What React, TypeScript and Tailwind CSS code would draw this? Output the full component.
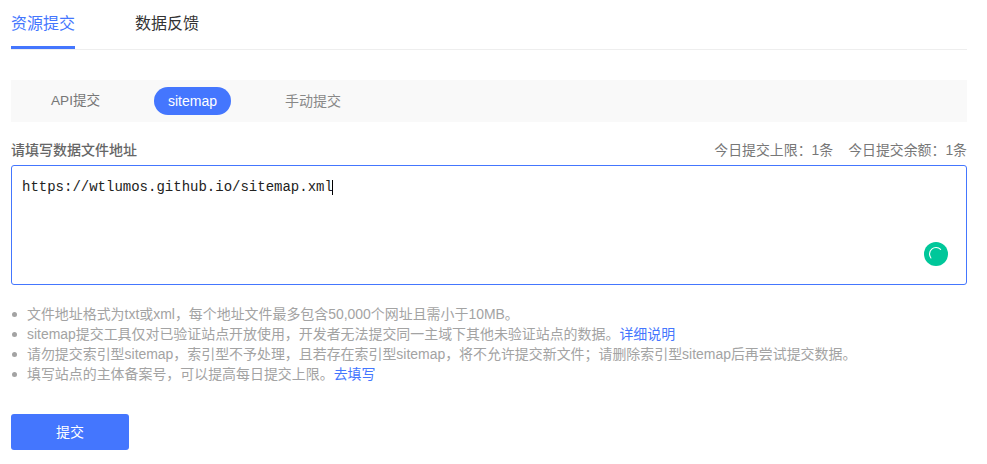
import React from 'react';

const notes: { text: string; link?: string }[] = [
  { text: '文件地址格式为txt或xml，每个地址文件最多包含50,000个网址且需小于10MB。' },
  { text: 'sitemap提交工具仅对已验证站点开放使用，开发者无法提交同一主域下其他未验证站点的数据。', link: '详细说明' },
  { text: '请勿提交索引型sitemap，索引型不予处理，且若存在索引型sitemap，将不允许提交新文件；请删除索引型sitemap后再尝试提交数据。' },
  { text: '填写站点的主体备案号，可以提高每日提交上限。', link: '去填写' },
];

export default function App() {
  return (
    <div className="w-[987px] h-[464px] overflow-hidden bg-white pl-[11px] pr-[20px] font-['Liberation_Sans','Noto_Sans_CJK_SC',sans-serif]">
      {/* Top tabs */}
      <div className="flex h-[50px] items-start border-b border-[#eeeeee]">
        <div className="h-[49px] w-[64px] border-b-[3px] border-[#4476fe] pt-[13px] text-center text-[16px] leading-[22px] text-[#4476fe]">资源提交</div>
        <div className="ml-[60px] pt-[13px] text-[16px] leading-[22px] text-[#333333]">数据反馈</div>
      </div>

      {/* Sub tabs */}
      <div className="mt-[30px] flex h-[42px] items-center bg-[#f9f9f9] pb-[1px] text-[14px]">
        <span className="ml-[40px] w-[49px] whitespace-nowrap text-[13.6px] leading-[28px] text-[#777777]">API提交</span>
        <span className="ml-[54px] h-[28px] w-[77px] rounded-full bg-[#4476fe] text-center leading-[28px] text-white">sitemap</span>
        <span className="ml-[54px] leading-[28px] text-[#888888]">手动提交</span>
      </div>

      {/* Label row */}
      <div className="mt-[18px] flex h-[21px] items-center justify-between">
        <span className="text-[14px] font-medium leading-[21px] text-[#666666]">请填写数据文件地址</span>
        <span className="flex gap-[15px] text-[13.9px] leading-[21px] text-[#777777]">
          <span>今日提交上限：1条</span>
          <span>今日提交余额：1条</span>
        </span>
      </div>

      {/* Input box */}
      <div className="relative mt-[4px] h-[120px] rounded-[3px] border border-[#4476fe] pl-[10px] pt-[11px]">
        <div className="flex items-center font-['Liberation_Mono',monospace] text-[14px] leading-[20px] text-[#222222]">
          https://wtlumos.github.io/sitemap.xml
          <span className="ml-[-1px] inline-block h-[15px] w-px bg-black" />
        </div>
        <div className="absolute bottom-[18px] right-[18px] flex h-[24px] w-[24px] items-center justify-center rounded-full bg-[#00c79a]">
          <svg width="16" height="16" viewBox="0 0 16 16" fill="none">
            <path d="M2.9 12A6.5 6.5 0 0 1 12.6 3.4" stroke="white" strokeWidth="1.1" strokeLinecap="round" />
          </svg>
        </div>
      </div>

      {/* Notes */}
      <ul className="mt-[19px] text-[13.95px] leading-[20px] text-[#a3a3a3]">
        {notes.map((n) => (
          <li key={n.text} className="flex items-center">
            <span className="ml-[1px] mr-[10px] h-[5px] w-[5px] rounded-full bg-[#a3a3a3]" />
            <span>
              {n.text}
              {n.link && <span className="text-[#4476fe]">{n.link}</span>}
            </span>
          </li>
        ))}
      </ul>

      {/* Submit */}
      <div className="mt-[30px] flex h-[36px] w-[118px] items-center justify-center rounded-[3px] bg-[#4476fe] text-[14px] text-white">提交</div>
    </div>
  );
}
